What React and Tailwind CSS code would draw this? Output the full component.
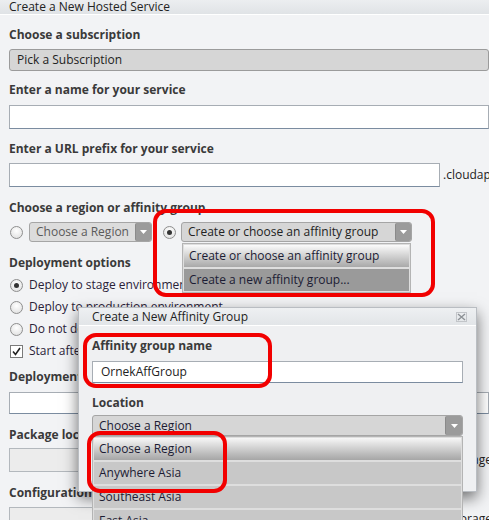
import React from "react";

const Arrow = ({ w = 16, h = 19 }) => (
  <div
    className="flex items-center justify-center rounded-[2px] bg-[#9b9b9b] border-l border-[#8a8a8a]"
    style={{ width: w, height: h }}
  >
    <svg width="7" height="4" viewBox="0 0 7 4">
      <path d="M0 0H7L3.5 4Z" fill="#fff" />
    </svg>
  </div>
);

const Label = ({ children, className = "" }) => (
  <div className={"h-[20px] leading-[20px] text-[12px] font-bold text-[#3a3a3a] whitespace-nowrap " + className}>
    {children}
  </div>
);

const Radio = ({ checked }) => (
  <div className="w-[13px] h-[13px] shrink-0 rounded-full border border-[#8e8e8e] bg-[radial-gradient(circle_at_50%_35%,#ffffff,#dcdcdc)] flex items-center justify-center">
    {checked && <div className="w-[5px] h-[5px] rounded-full bg-[#333]" />}
  </div>
);

const Checkbox = () => (
  <div className="w-[13px] h-[13px] shrink-0 border border-[#7a7a7a] bg-white flex items-center justify-center">
    <svg width="9" height="9" viewBox="0 0 9 9">
      <path d="M1 4.5L3.5 7.5L8 1" fill="none" stroke="#222" strokeWidth="1.6" />
    </svg>
  </div>
);

const Input = ({ className = "", children }) => (
  <div
    className={
      "bg-white border border-[#a7adb4] border-b-[#7b8ca0] flex items-center pl-[8px] text-[12px] text-[#222] " +
      className
    }
  >
    {children}
  </div>
);

export default function App() {
  return (
    <div className="relative w-[489px] h-[520px] overflow-hidden bg-[#f2f3f5] font-['Open_Sans',sans-serif] text-[#222]">
      {/* title bar */}
      <div className="h-[15px] bg-gradient-to-b from-[#eceef0] to-[#e0e3e6] border-b border-white pl-[9px] text-[12px] leading-[14px] text-[#222] whitespace-nowrap">
        Create a New Hosted Service
      </div>

      <div className="pl-[9px]">
        <Label className="mt-[10px]">Choose a subscription</Label>
        <div className="mt-[4px] h-[22px] rounded-[3px] border border-[#9b9b9b] bg-[#d6d6d6] flex items-center pl-[7px] text-[12px] text-[#222]">
          Pick a Subscription
        </div>

        <Label className="mt-[9px]">Enter a name for your service</Label>
        <Input className="mt-[5px] h-[24px]" />

        <Label className="mt-[10px]">Enter a URL prefix for your service</Label>
        <div className="mt-[4px] flex items-center gap-[3px] whitespace-nowrap">
          <Input className="h-[24px] w-[431px] shrink-0" />
          <span className="text-[12px] text-[#222]">.cloudapp.net</span>
        </div>

        <Label className="mt-[11px]">Choose a region or affinity group</Label>
        <div className="mt-[4px] h-[20px] flex items-center">
          <div className="ml-[1px]">
            <Radio />
          </div>
          <div className="ml-[6px] w-[123px] h-[20px] rounded-[3px] border border-[#a5a5a5] bg-[#dcdcdc] flex items-center justify-between pl-[6px] text-[12px] text-[#5a5a5a] whitespace-nowrap">
            Choose a Region
            <Arrow w={16} h={18} />
          </div>
          <div className="ml-[11px]">
            <Radio checked />
          </div>
          <div className="ml-[5px] w-[231px] h-[20px] rounded-[3px] border border-[#a5a5a5] bg-[#d6d6d6] flex items-center justify-between pl-[6px] text-[12px] text-[#222] whitespace-nowrap">
            Create or choose an affinity group
            <Arrow w={16} h={18} />
          </div>
        </div>

        <Label className="mt-[11px]">Deployment options</Label>
        <div className="mt-[1px] flex flex-col text-[12px] text-[#2a2238] whitespace-nowrap">
          <div className="h-[22px] flex items-center gap-[6px] pl-[1px]">
            <Radio checked />
            Deploy to stage environment
          </div>
          <div className="h-[22px] flex items-center gap-[6px] pl-[1px]">
            <Radio />
            Deploy to production environment
          </div>
          <div className="h-[22px] flex items-center gap-[6px] pl-[1px]">
            <Radio />
            Do not deploy
          </div>
          <div className="h-[22px] flex items-center gap-[6px] pl-[1px]">
            <Checkbox />
            Start after successful deployment
          </div>
        </div>

        <Label className="mt-[5px]">Deployment name</Label>
        <Input className="mt-[5px] h-[22px]" />

        <Label className="mt-[11px]">Package location</Label>
        <div className="mt-[3px] flex items-center gap-[4px] whitespace-nowrap">
          <div className="h-[24px] w-[436px] shrink-0 bg-[#ececec] border border-[#b3b8bd]" />
          <span className="text-[12px] text-[#222]">Storage</span>
        </div>

        <Label className="mt-[11px]">Configuration file</Label>
        <div className="mt-[4px] flex items-center gap-[4px] whitespace-nowrap">
          <div className="h-[24px] w-[436px] shrink-0 bg-[#ececec] border border-[#b3b8bd]" />
          <span className="text-[12px] text-[#222]">Storage</span>
        </div>
      </div>

      {/* affinity dropdown list */}
      <div className="absolute left-[182px] top-[243px] w-[229px] border border-[#b4b4b4] bg-[#dedede] p-[1px] flex flex-col gap-[2px] text-[12px] text-[#1c1c34] whitespace-nowrap">
        <div className="h-[22px] flex items-center pl-[5px] bg-gradient-to-b from-[#fbfbfb] to-[#a9a9a9]">
          Create or choose an affinity group
        </div>
        <div className="h-[22px] flex items-center pl-[5px] bg-[#9a9a9a]">
          Create a new affinity group...
        </div>
      </div>

      {/* red highlight 1 */}
      <div className="absolute left-[153px] top-[209px] w-[282px] h-[88px] border-[4px] border-[#f20000] rounded-[13px]" />

      {/* dialog */}
      <div className="absolute left-[78px] top-[307px] w-[399px] h-[185px] bg-[#eff0f2] border border-[#b9bdc2] shadow-[0_6px_14px_rgba(0,0,0,0.55)]">
        <div className="h-[18px] bg-gradient-to-b from-[#eef0f2] to-[#e2e5e8] border-b border-white flex items-center justify-between pl-[13px] pr-[9px]">
          <span className="text-[12px] text-[#222] whitespace-nowrap">Create a New Affinity Group</span>
          <svg width="11" height="10" viewBox="0 0 11 10">
            <rect x="0.5" y="0.5" width="10" height="9" fill="none" stroke="#c2c5c9" />
            <path d="M2 2L9 8M9 2L2 8" stroke="#8d9196" strokeWidth="1.4" />
          </svg>
        </div>
        <div className="pl-[13px] pr-[13px]">
          <Label className="mt-[10px]">Affinity group name</Label>
          <Input className="mt-[5px] h-[22px]">OrnekAffGroup</Input>
          <Label className="mt-[10px]">Location</Label>
          <div className="mt-[2px] h-[21px] rounded-[3px] border border-[#a5a5a5] bg-[#d6d6d6] flex items-center justify-between pl-[6px] text-[12px] text-[#1c1c34] whitespace-nowrap">
            Choose a Region
            <Arrow w={17} h={19} />
          </div>
        </div>
      </div>

      {/* location dropdown list */}
      <div className="absolute left-[92px] top-[436px] w-[371px] border border-[#b4b4b4] bg-[#dedede] p-[1px] flex flex-col gap-[2px] text-[12px] text-[#1c1c34] whitespace-nowrap">
        <div className="h-[22px] flex items-center pl-[5px] bg-gradient-to-b from-[#f7f7f7] to-[#a6a6a6]">
          Choose a Region
        </div>
        <div className="h-[22px] flex items-center pl-[5px] bg-[#c8c8c8]">Anywhere Asia</div>
        <div className="h-[22px] flex items-center pl-[5px] bg-[#c8c8c8]">Southeast Asia</div>
        <div className="h-[22px] flex items-center pl-[5px] bg-[#c8c8c8]">East Asia</div>
      </div>

      {/* red highlight 2 */}
      <div className="absolute left-[83px] top-[333px] w-[189px] h-[55px] border-[4px] border-[#f20000] rounded-[13px]" />
      {/* red highlight 3 */}
      <div className="absolute left-[87px] top-[431px] w-[140px] h-[62px] border-[4px] border-[#f20000] rounded-[13px]" />
    </div>
  );
}
